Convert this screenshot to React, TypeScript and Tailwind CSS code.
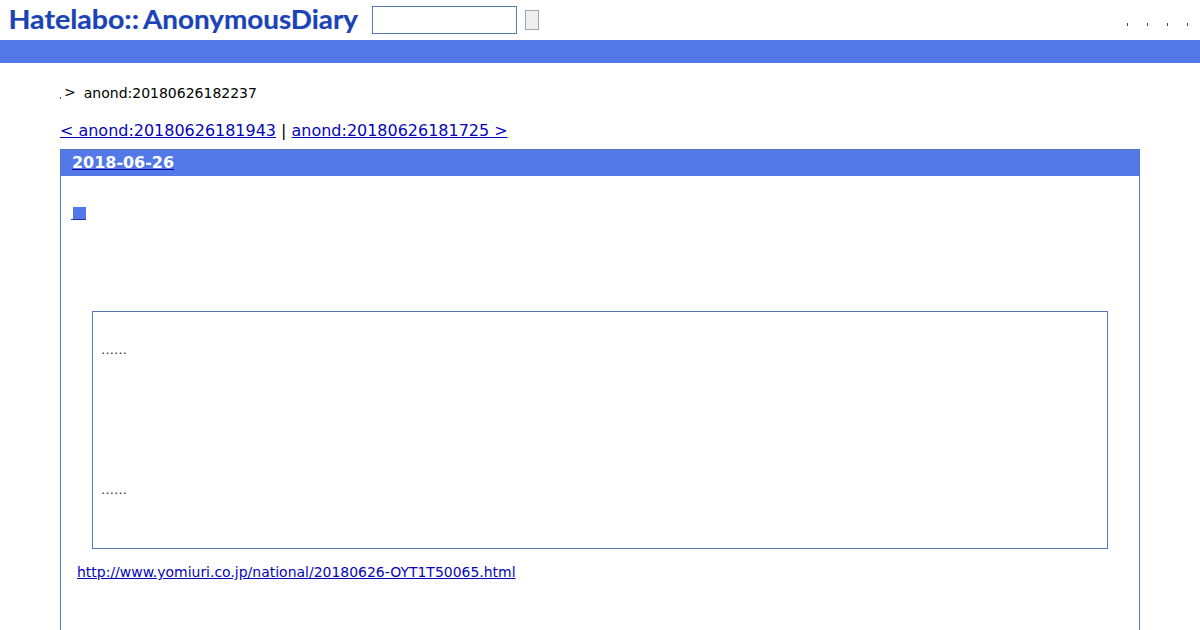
const LINK = 'text-[#0505b8] underline'

const Logo = () => (
    <svg
        className="block shrink-0"
        width="350"
        height="40"
        role="img"
        aria-label="Hatelabo::AnonymousDiary"
    >
        <g
            className="fill-[#1a43b8] stroke-[#1a43b8] font-['Lato'] text-[26px] font-bold"
            strokeWidth="0.2"
        >
            <text x="-0.5" y="29" textLength="130.5" lengthAdjust="spacingAndGlyphs">
                Hatelabo::
            </text>
            <text x="134" y="29" textLength="215" lengthAdjust="spacingAndGlyphs">
                AnonymousDiary
            </text>
        </g>
    </svg>
)

const Header = () => (
    <header>
        <div className="flex h-10 items-center pl-[9px] pr-3">
            <Logo />
            <input
                className="ml-[13px] h-7 w-[145px] border border-[#5279b5] bg-white px-1 outline-none"
                type="text"
            />
            <button className="ml-2 h-5 w-[14px] border border-[#a5a5a5] bg-[#efefef]" />
            <ul className="ml-auto mt-[9px] flex gap-[19px]">
                {[0, 1, 2, 3].map((item) => (
                    <li key={item} className="h-[3px] w-px bg-[#444]" />
                ))}
            </ul>
        </div>
        <div className="h-[23px] bg-[#5279e7]" />
    </header>
)

export default function App() {
    return (
        <div className="h-[630px] overflow-hidden bg-white font-['DejaVu_Sans',sans-serif] text-black">
            <Header />
            <main className="px-[60px]">
                <div className="flex h-[60px] items-center text-sm">
                    <span className="mt-[9px] h-[2px] w-px bg-[#555]" />
                    <span className="mb-[2px] ml-[3px]">&gt;</span>
                    <span className="ml-2">anond:20180626182237</span>
                </div>
                <div className="h-[26px] text-[15.98px] leading-4">
                    <a className={LINK} href="#">
                        &lt; anond:20180626181943
                    </a>
                    {' | '}
                    <a className={LINK} href="#">
                        anond:20180626181725 &gt;
                    </a>
                </div>
                <article className="h-[520px] border border-[#5279b5]">
                    <h2 className="h-[26px] bg-[#5279e7] pl-[11px] text-[15.96px] leading-[26px] font-bold">
                        <a
                            className="text-white underline decoration-[#0000a8]"
                            href="#"
                        >
                            2018-06-26
                        </a>
                    </h2>
                    <div className="pt-[31px]">
                        <h3 className="flex h-[13px] pl-[10px]">
                            <a
                                className="flex h-[13px] w-[15px] justify-end border-b border-[#2030b0]"
                                href="#"
                            >
                                <span className="h-3 w-[13px] bg-[#5279e7]" />
                            </a>
                        </h3>
                        <blockquote className="mx-[31px] mt-[91px] h-[238px] border border-[#5279b5] px-2 text-[13px] leading-5 text-[#333]">
                            <p className="mt-[28px]">……</p>
                            <p className="mt-[120px]">……</p>
                        </blockquote>
                        <p className="mt-[13px] pl-4 text-[13.98px] leading-5">
                            <a className={LINK} href="#">
                                http://www.yomiuri.co.jp/national/20180626-OYT1T50065.html
                            </a>
                        </p>
                    </div>
                </article>
            </main>
        </div>
    )
}
